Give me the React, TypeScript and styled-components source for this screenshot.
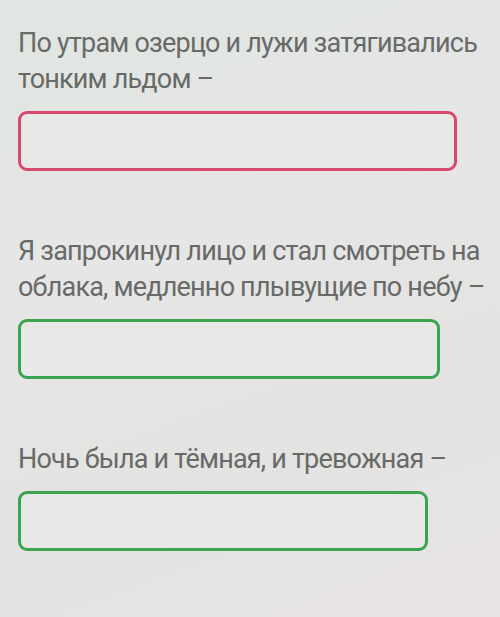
import React from 'react';
import styled, { createGlobalStyle } from 'styled-components';

const GlobalStyle = createGlobalStyle`
  html, body {
    margin: 0;
    padding: 0;
    background: #e3e5e2;
  }
  body {
    font-family: Roboto, "Noto Sans", sans-serif;
  }
`;

const questions = [
  { text: 'По утрам озерцо и лужи затягивались тонким льдом –', state: 'error', width: 439 },
  { text: 'Я запрокинул лицо и стал смотреть на облака, медленно плывущие по небу –', state: 'ok', width: 422 },
  { text: 'Ночь была и тёмная, и тревожная –', state: 'ok', width: 410 },
];

const App = () => {
  return (
    <>
      <GlobalStyle />
      <Page>
        {questions.map((q, i) => (
          <Question key={i}>
            <Prompt>{q.text}</Prompt>
            <AnswerBox $state={q.state} $width={q.width} />
          </Question>
        ))}
      </Page>
    </>
  );
};

const Page = styled.div`
  width: 500px;
  height: 617px;
  box-sizing: border-box;
  padding: 25px 0 0 18px;
  display: flex;
  flex-direction: column;
  gap: 62px;
  background: linear-gradient(160deg, #e0e6e1 0%, #e6e6e6 40%, #e3e3e1 70%, #e9e4e7 100%);
  overflow: hidden;
`;

const Question = styled.div`
  display: flex;
  flex-direction: column;
  gap: 14px;
`;

const Prompt = styled.div`
  width: 475px;
  font-size: 27px;
  line-height: 36px;
  color: #686a68;
  letter-spacing: -0.8px;
`;

const AnswerBox = styled.div<{ $state: string; $width: number }>`
  width: ${(p) => p.$width}px;
  height: 60px;
  box-sizing: border-box;
  border: 3px solid ${(p) => (p.$state === 'error' ? '#d64a6e' : '#3ca350')};
  border-radius: 9px;
  background: #e8e8e7;
`;

export default App;
